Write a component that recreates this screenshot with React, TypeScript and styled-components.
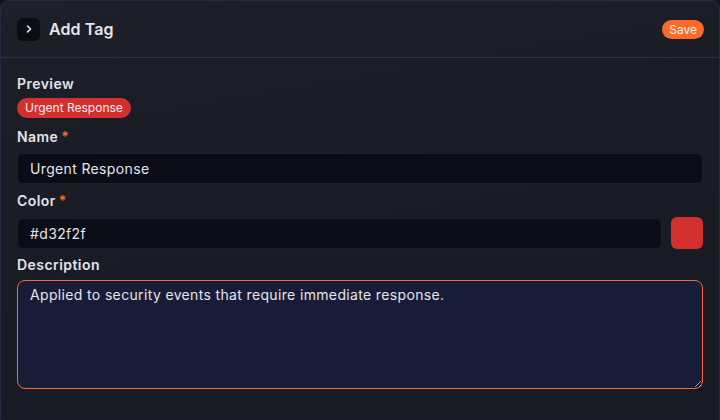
import React, { useState } from 'react';
import styled, { createGlobalStyle } from 'styled-components';

const GlobalStyle = createGlobalStyle`
  html, body {
    margin: 0;
    padding: 0;
    background: #12141c;
    font-family: Inter, 'Noto Sans', sans-serif;
    color: #e6e7ec;
  }
  * { box-sizing: border-box; }
`;

const Panel = styled.div`
  width: 720px;
  height: 440px;
  border: 1px solid #262b45;
  border-radius: 9px 9px 0 0;
  background: linear-gradient(170deg, #1d2029 0%, #191c25 40%, #171a22 100%);
  overflow: hidden;
`;

const Header = styled.div`
  height: 57px;
  display: flex;
  align-items: center;
  justify-content: space-between;
  padding: 0 15px 0 16px;
  border-bottom: 1px solid #2d3040;
`;

const TitleGroup = styled.div`
  display: flex;
  align-items: center;
  gap: 9px;
`;

const ToggleButton = styled.button`
  width: 23px;
  height: 23px;
  border: none;
  border-radius: 6px;
  background: #0a0d14;
  color: #e8e8ee;
  display: flex;
  align-items: center;
  justify-content: center;
  padding: 0;
  cursor: pointer;
`;

const Title = styled.h3`
  margin: 0;
  font-size: 16px;
  font-weight: 600;
  color: #e4e5ea;
  letter-spacing: 0.1px;
`;

const SaveButton = styled.button`
  height: 19px;
  padding: 0 7px;
  border: none;
  border-radius: 10px;
  background: #ff6a2a;
  color: #fff3ea;
  font-family: inherit;
  font-size: 12px;
  cursor: pointer;
`;

const Body = styled.div`
  padding: 17px 16px 0 16px;
  display: flex;
  flex-direction: column;
`;

const Label = styled.div`
  font-size: 14px;
  font-weight: 600;
  color: #e3e4ea;
  height: 18px;
  line-height: 18px;
  letter-spacing: 0.45px;
`;

const Required = styled.span`
  color: #ff6a2a;
  margin-left: 3px;
`;

const Field = styled.div<{ $gap?: number; $after?: number }>`
  display: flex;
  flex-direction: column;
  gap: ${({ $gap }) => $gap ?? 7}px;
  margin-bottom: ${({ $after }) => $after ?? 8}px;
`;

const Badge = styled.span<{ $color: string }>`
  align-self: flex-start;
  height: 20px;
  line-height: 20px;
  padding: 0 8px;
  border-radius: 10px;
  background: ${({ $color }) => $color};
  color: #fbeeee;
  font-size: 12px;
`;

const Input = styled.input`
  height: 31px;
  width: 100%;
  border: 1px solid #1b1f2c;
  border-radius: 6px;
  background: #0a0d15;
  color: #e4e5ea;
  font-family: inherit;
  font-size: 14px;
  letter-spacing: 0.35px;
  padding: 0 12px;
  outline: none;
`;

const ColorRow = styled.div`
  display: flex;
  align-items: center;
  gap: 9px;
`;

const Swatch = styled.div<{ $color: string }>`
  flex: 0 0 32px;
  height: 32px;
  border-radius: 6px;
  background: ${({ $color }) => $color};
`;

const TextArea = styled.textarea`
  height: 109px;
  width: 100%;
  border: 1px solid #ff6a2a;
  border-radius: 8px;
  background: #181c36;
  color: #e4e5ea;
  font-family: inherit;
  font-size: 14px;
  letter-spacing: 0.35px;
  line-height: 20px;
  padding: 4px 12px;
  outline: none;
  resize: vertical;
`;

export default function App() {
  const [name, setName] = useState('Urgent Response');
  const [color, setColor] = useState('#d32f2f');
  const [desc, setDesc] = useState('Applied to security events that require immediate response.');

  return (
    <>
      <GlobalStyle />
      <Panel>
        <Header>
          <TitleGroup>
            <ToggleButton aria-label="Toggle">
              <svg width="10" height="10" viewBox="0 0 10 10" fill="none">
                <path d="M3.5 2 L6.5 5 L3.5 8" stroke="currentColor" strokeWidth="1.6" strokeLinecap="round" strokeLinejoin="round" />
              </svg>
            </ToggleButton>
            <Title>Add Tag</Title>
          </TitleGroup>
          <SaveButton>Save</SaveButton>
        </Header>
        <Body>
          <Field $gap={5} $after={10}>
            <Label>Preview</Label>
            <Badge $color={color}>{name}</Badge>
          </Field>
          <Field>
            <Label>
              Name<Required>*</Required>
            </Label>
            <Input value={name} onChange={(e) => setName(e.target.value)} />
          </Field>
          <Field $after={7}>
            <Label>
              Color<Required>*</Required>
            </Label>
            <ColorRow>
              <Input value={color} onChange={(e) => setColor(e.target.value)} />
              <Swatch $color={color} />
            </ColorRow>
          </Field>
          <Field $gap={6}>
            <Label>Description</Label>
            <TextArea value={desc} onChange={(e) => setDesc(e.target.value)} />
          </Field>
        </Body>
      </Panel>
    </>
  );
}
